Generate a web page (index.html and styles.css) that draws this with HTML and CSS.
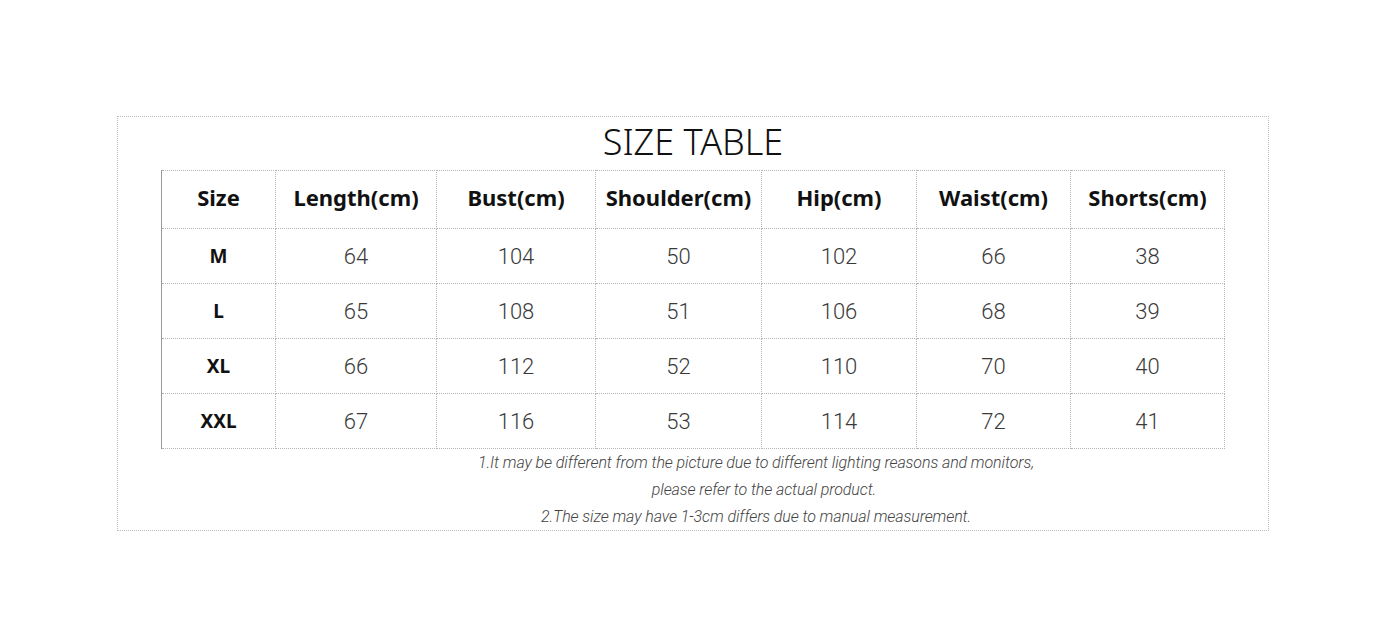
FILE: index.html
```html
<!DOCTYPE html>
<html>
<head>
<meta charset="utf-8">
<link rel="stylesheet" href="styles.css">
</head>
<body>
<div class="page">
  <div class="frame">
    <h1 class="title">SIZE TABLE</h1>
    <table class="sizes">
      <colgroup>
        <col style="width:114px"><col style="width:161px"><col style="width:159px"><col style="width:166px"><col style="width:155px"><col style="width:154px"><col style="width:154px">
      </colgroup>
      <thead>
        <tr><th>Size</th><th>Length(cm)</th><th>Bust(cm)</th><th>Shoulder(cm)</th><th>Hip(cm)</th><th>Waist(cm)</th><th>Shorts(cm)</th></tr>
      </thead>
      <tbody>
        <tr><td class="sz">M</td><td>64</td><td>104</td><td>50</td><td>102</td><td>66</td><td>38</td></tr>
        <tr><td class="sz">L</td><td>65</td><td>108</td><td>51</td><td>106</td><td>68</td><td>39</td></tr>
        <tr><td class="sz">XL</td><td>66</td><td>112</td><td>52</td><td>110</td><td>70</td><td>40</td></tr>
        <tr><td class="sz">XXL</td><td>67</td><td>116</td><td>53</td><td>114</td><td>72</td><td>41</td></tr>
      </tbody>
    </table>
    <div class="notes">
      <p>1.It may be different from the picture due to different lighting reasons and monitors,</p>
      <p class="indent">please refer to the actual product.</p>
      <p>2.The size may have 1-3cm differs due to manual measurement.</p>
    </div>
  </div>
</div>
</body>
</html>
```
FILE: styles.css
```css
html, body {
  margin: 0;
  padding: 0;
  background: #ffffff;
}
.page {
  padding: 116px 0 0 117px;
}
.frame {
  width: 1150px;
  height: 413px;
  border: 1px dotted #bdbdbd;
  box-sizing: content-box;
  padding: 0;
}
.title {
  margin: 0;
  height: 53px;
  line-height: 49px;
  text-align: center;
  font-family: "Noto Sans", sans-serif;
  font-weight: 300;
  font-size: 36px;
  color: #111;
}
.sizes {
  margin-left: 43px;
  border-collapse: collapse;
  table-layout: fixed;
  width: 1063px;
}
.sizes th, .sizes td {
  border: 1px dotted #b5b5b5;
  text-align: center;
  padding: 0;
}
.sizes th:first-child, .sizes td:first-child {
  border-left: 1px solid #9a9a9a;
}
.sizes th {
  height: 58px;
  padding-bottom: 5px;
  box-sizing: border-box;
  font-family: "Noto Sans", sans-serif;
  font-weight: 700;
  font-size: 22px;
  color: #111;
}
.sizes td {
  height: 54px;
  font-family: "Roboto", sans-serif;
  font-weight: 300;
  font-size: 22px;
  color: #3a3a3a;
}
.sizes td.sz {
  font-family: "Noto Sans", sans-serif;
  font-weight: 700;
  font-size: 19px;
  color: #111;
}
.notes {
  padding-left: 126px;
  text-align: center;
  font-family: "Roboto", sans-serif;
  font-weight: 300;
  font-style: italic;
  font-size: 16px;
  letter-spacing: -0.1px;
  color: #444;
}
.notes p {
  margin: 0;
  line-height: 27px;
}
.notes p.indent {
  padding-left: 16px;
}
```
